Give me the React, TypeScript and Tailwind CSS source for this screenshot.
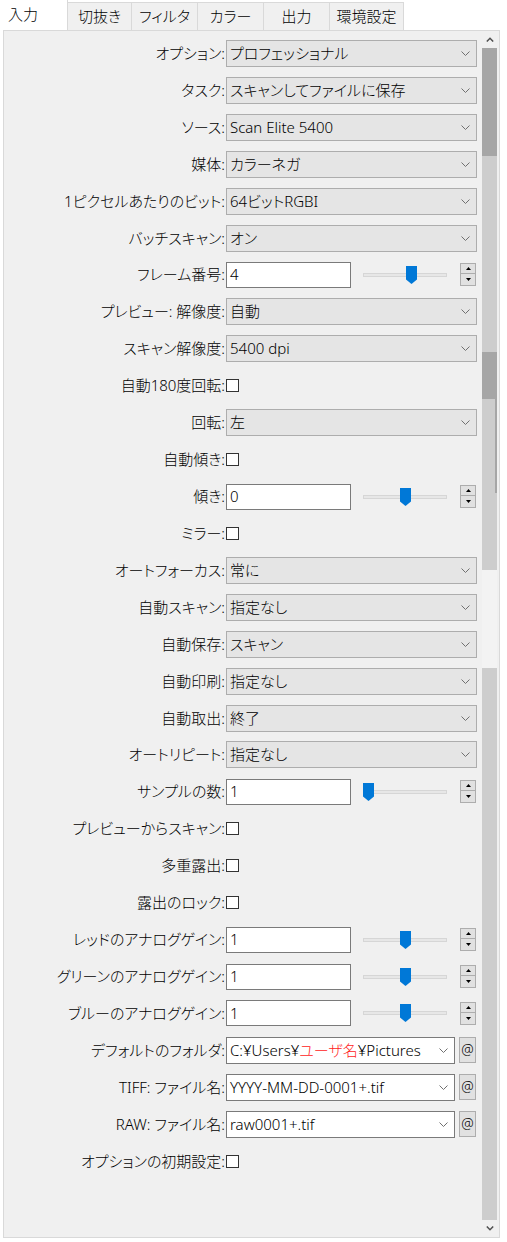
import React from 'react';

type Row =
    | { kind: 'combo'; label: string; value: React.ReactNode }
    | { kind: 'check'; label: string }
    | { kind: 'slider'; label: string; value: string; thumb: string }
    | { kind: 'file'; label: string; value: React.ReactNode };

const rows: Row[] = [
    { kind: 'combo', label: 'オプション:', value: 'プロフェッショナル' },
    { kind: 'combo', label: 'タスク:', value: 'スキャンしてファイルに保存' },
    { kind: 'combo', label: 'ソース:', value: 'Scan Elite 5400' },
    { kind: 'combo', label: '媒体:', value: 'カラーネガ' },
    { kind: 'combo', label: '1ピクセルあたりのビット:', value: '64ビットRGBI' },
    { kind: 'combo', label: 'バッチスキャン:', value: 'オン' },
    { kind: 'slider', label: 'フレーム番号:', value: '4', thumb: 'left-[43px]' },
    { kind: 'combo', label: 'プレビュー: 解像度:', value: '自動' },
    { kind: 'combo', label: 'スキャン解像度:', value: '5400 dpi' },
    { kind: 'check', label: '自動180度回転:' },
    { kind: 'combo', label: '回転:', value: '左' },
    { kind: 'check', label: '自動傾き:' },
    { kind: 'slider', label: '傾き:', value: '0', thumb: 'left-[37px]' },
    { kind: 'check', label: 'ミラー:' },
    { kind: 'combo', label: 'オートフォーカス:', value: '常に' },
    { kind: 'combo', label: '自動スキャン:', value: '指定なし' },
    { kind: 'combo', label: '自動保存:', value: 'スキャン' },
    { kind: 'combo', label: '自動印刷:', value: '指定なし' },
    { kind: 'combo', label: '自動取出:', value: '終了' },
    { kind: 'combo', label: 'オートリピート:', value: '指定なし' },
    { kind: 'slider', label: 'サンプルの数:', value: '1', thumb: 'left-0' },
    { kind: 'check', label: 'プレビューからスキャン:' },
    { kind: 'check', label: '多重露出:' },
    { kind: 'check', label: '露出のロック:' },
    { kind: 'slider', label: 'レッドのアナログゲイン:', value: '1', thumb: 'left-[37px]' },
    { kind: 'slider', label: 'グリーンのアナログゲイン:', value: '1', thumb: 'left-[37px]' },
    { kind: 'slider', label: 'ブルーのアナログゲイン:', value: '1', thumb: 'left-[37px]' },
    {
        kind: 'file',
        label: 'デフォルトのフォルダ:',
        value: (
            <>
                C:¥Users¥<span className="text-[#ff1a1a]">ユーザ名</span>¥Pictures
            </>
        ),
    },
    { kind: 'file', label: 'TIFF: ファイル名:', value: 'YYYY-MM-DD-0001+.tif' },
    { kind: 'file', label: 'RAW: ファイル名:', value: 'raw0001+.tif' },
    { kind: 'check', label: 'オプションの初期設定:' },
];

const tabs = ['切抜き', 'フィルタ', 'カラー', '出力', '環境設定'];
const tabWidths = ['w-[64px]', 'w-[66px]', 'w-[66px]', 'w-[66px]', 'w-[74px]'];

function Chevron() {
    return (
        <svg width="9" height="5" viewBox="0 0 9 5" className="shrink-0">
            <path d="M0.5 0.5L4.5 4.5L8.5 0.5" fill="none" stroke="#707070" strokeWidth="1" />
        </svg>
    );
}

function Spinner() {
    return (
        <div className="ml-[13px] flex flex-col w-[16px] h-[23px]">
            <div className="h-[11px] border border-[#adadad] bg-[#e1e1e1] flex items-center justify-center">
                <svg width="5" height="3" viewBox="0 0 5 3"><path d="M2.5 0L5 3H0Z" fill="#000" /></svg>
            </div>
            <div className="h-[12px] border border-[#adadad] border-t-0 bg-[#e1e1e1] flex items-center justify-center">
                <svg width="5" height="3" viewBox="0 0 5 3"><path d="M0 0H5L2.5 3Z" fill="#000" /></svg>
            </div>
        </div>
    );
}

function Control({ row }: { row: Row }) {
    if (row.kind === 'combo') {
        return (
            <div className="w-[251px] h-[27px] bg-[#e5e5e5] border border-[#adadad] flex items-center pl-[3px] pr-[6px]">
                <span className="flex-1 whitespace-nowrap">{row.value}</span>
                <Chevron />
            </div>
        );
    }
    if (row.kind === 'check') {
        return <div className="w-[13px] h-[13px] bg-white border border-[#333]" />;
    }
    if (row.kind === 'slider') {
        return (
            <div className="flex items-center">
                <div className="w-[125px] h-[26px] bg-white border border-[#7a7a7a] flex items-center pl-[3px]">
                    {row.value}
                </div>
                <div className="ml-[12px] w-[84px] h-[18px] relative flex items-center">
                    <div className="w-full h-[4px] bg-[#e7e7e7] border border-[#d6d6d6]" />
                    <svg width="11" height="18" viewBox="0 0 11 18" className={`absolute top-0 ${row.thumb}`}>
                        <path d="M0 0H11V13.5L5.5 18L0 13.5Z" fill="#0078d7" />
                    </svg>
                </div>
                <Spinner />
            </div>
        );
    }
    return (
        <div className="flex items-center">
            <div className="w-[229px] h-[27px] bg-white border border-[#7a7a7a] flex items-center pl-[3px] pr-[6px]">
                <span className="flex-1 whitespace-nowrap">{row.value}</span>
                <Chevron />
            </div>
            <div className="ml-[4px] w-[17px] h-[26px] bg-[#e1e1e1] border border-[#adadad] flex items-center justify-center text-[14px]">
                @
            </div>
        </div>
    );
}

function Scrollbar() {
    return (
        <div className="w-[15px] flex flex-col mr-[2px]">
            <div className="h-[17px] flex items-center justify-center">
                <svg width="8" height="5" viewBox="0 0 8 5"><path d="M0.8 4.5L4 1.3L7.2 4.5" fill="none" stroke="#505050" strokeWidth="1.5" /></svg>
            </div>
            <div className="h-[108px] bg-[#a6a6a6]" />
            <div className="h-[196px] bg-[#cdcdcd]" />
            <div className="h-[47px] bg-[#a6a6a6]" />
            <div className="h-[94px] flex">
                <div className="flex-1 bg-[#cdcdcd]" />
                <div className="w-[2px] bg-[#a6a6a6]" />
            </div>
            <div className="h-[77px] bg-[#cdcdcd]" />
            <div className="h-[98px] bg-[#f3f3f3]" />
            <div className="flex-1 bg-[#cdcdcd]" />
            <div className="h-[17px] flex items-center justify-center">
                <svg width="8" height="5" viewBox="0 0 8 5"><path d="M0.8 0.5L4 3.7L7.2 0.5" fill="none" stroke="#505050" strokeWidth="1.5" /></svg>
            </div>
        </div>
    );
}

export default function App() {
    return (
        <div className="w-[507px] h-[1242px] bg-white text-black text-[15px] font-light font-['Noto_Sans','Noto_Sans_CJK_JP',sans-serif] [font-feature-settings:'palt'] leading-none overflow-hidden">
            {/* Tabs */}
            <div className="flex items-end h-[30px]">
                <div className="w-[68px] h-[30px] bg-white border-r border-[#d9d9d9] flex items-center pl-[8px] pb-[1px]">
                    入力
                </div>
                {tabs.map((t, i) => (
                    <div
                        key={t}
                        className={`${tabWidths[i]} h-[28px] bg-[#f0f0f0] border-t border-r border-[#d9d9d9] flex items-center justify-center`}
                    >
                        {t}
                    </div>
                ))}
            </div>

            {/* Panel */}
            <div className="ml-[3px] w-[497px] h-[1208px] border border-[#d9d9d9] bg-[#f0f0f0] flex">
                <div className="flex-1 pt-[4px]">
                    {rows.map(row => (
                        <div key={row.label} className="h-[36.93px] flex items-center">
                            <div className="w-[221px] mr-[1px] text-right whitespace-nowrap">{row.label}</div>
                            <Control row={row} />
                        </div>
                    ))}
                </div>
                <Scrollbar />
            </div>
        </div>
    );
}
